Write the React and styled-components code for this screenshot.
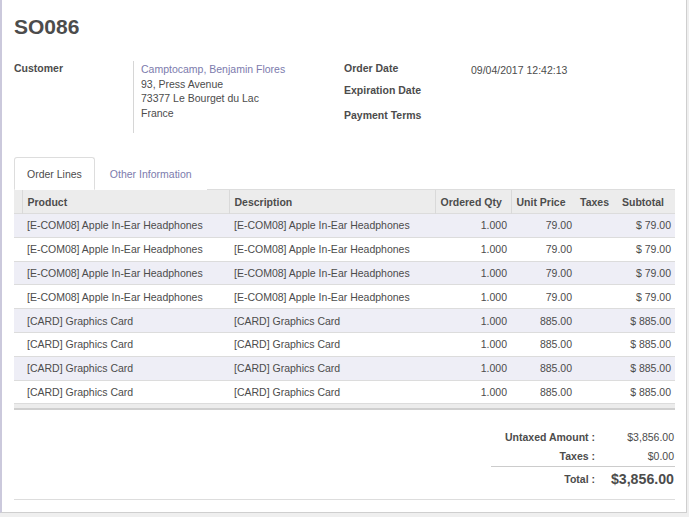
import React from "react";
import styled, { createGlobalStyle } from "styled-components";

const Global = createGlobalStyle`
  html, body { margin: 0; padding: 0; background: #efefef; }
  body { font-family: "Liberation Sans", Arial, sans-serif; font-size: 10.5px; color: #4c4c4c; }
`;

const Page = styled.div`
  width: 689px;
  height: 517px;
  overflow: hidden;
  background: #efefef;
`;

const Sheet = styled.div`
  box-sizing: border-box;
  width: 687px;
  height: 513px;
  background: #fff;
  border-left: 2px solid #cbc9dc;
  border-right: 1px solid #cfcfcf;
  border-bottom: 1px solid #cfcfcf;
  padding: 15px 11px 0 12px;
  display: flex;
  flex-direction: column;
`;

const Title = styled.h1`
  margin: 0;
  font-size: 21px;
  line-height: 24px;
  font-weight: bold;
  color: #4c4c4c;
`;

const Header = styled.div`
  display: grid;
  grid-template-columns: 330px 1fr;
  margin-top: 22px;
  height: 96px;
`;

const Group = styled.div`
  display: grid;
  grid-template-columns: ${(p) => p.$label}px 1fr;
  align-content: start;
`;

const Label = styled.div`
  font-weight: bold;
  line-height: 14px;
  height: 14px;
  margin-top: ${(p) => p.$mt || 0}px;
`;

const Value = styled.div`
  line-height: 14px;
  height: 14px;
  margin-top: ${(p) => (p.$mt || 0) + 2}px;
`;

const Address = styled.div`
  border-left: 1px solid #d6d6d6;
  padding: 0 0 0 7px;
  line-height: 14.5px;
  height: 72px;
`;

const Link = styled.div`
  color: #7c7bad;
  margin-top: 1px;
`;

const Tabs = styled.div`
  display: flex;
  border-bottom: 1px solid #ddd;
  height: 32px;
`;

const Tab = styled.div`
  box-sizing: border-box;
  height: 33px;
  padding: 0 ${(p) => (p.$active ? 12 : 14)}px;
  line-height: 32px;
  white-space: nowrap;
  color: ${(p) => (p.$active ? "#4c4c4c" : "#7c7bad")};
  background: #fff;
  border: 1px solid ${(p) => (p.$active ? "#ddd" : "transparent")};
  border-bottom-color: ${(p) => (p.$active ? "#fff" : "transparent")};
  border-radius: 3px 3px 0 0;
`;

const Table = styled.table`
  width: 661px;
  border-collapse: collapse;
  table-layout: fixed;
`;

const Th = styled.th`
  background: #ececec;
  height: 23px;
  padding: 0 5px 0 ${(p) => p.$pl ?? 5}px;
  text-align: left;
  font-weight: bold;
  border-left: ${(p) => (p.$sep ? "1px solid #d9d9d9" : "none")};
  white-space: nowrap;
  overflow: hidden;
`;

const HandleTh = styled.th`
  background: #ececec;
  padding: 0;
`;

const Tr = styled.tr`
  background: ${(p) => (p.$odd ? "#eeeef6" : "#fff")};
  border-top: 1px solid #dcdcdc;
`;

const Td = styled.td`
  height: 22.8px;
  padding: 0 ${(p) => (p.$right ? 4 : 5)}px 0 5px;
  text-align: ${(p) => (p.$right ? "right" : "left")};
  white-space: nowrap;
  overflow: hidden;
`;

const HandleCell = styled.td`
  padding: 0;
`;

const FootRow = styled.tr`
  background: #ececec;
  border-top: 1px solid #dcdcdc;
  border-bottom: 2px solid #cfcfcf;
`;

const FootCell = styled.td`
  height: 4px;
  padding: 0;
`;

const Totals = styled.div`
  align-self: flex-end;
  width: 184px;
  margin-top: 18px;
  display: grid;
  grid-template-columns: 1fr 80px;
`;

const TLabel = styled.div`
  text-align: right;
  font-weight: bold;
  line-height: 19px;
  ${(p) => p.$total && "border-top: 1px solid #ccc; padding-top: 3px; line-height: 18px;"}
`;

const TValue = styled.div`
  text-align: right;
  line-height: 19px;
  padding-right: 1px;
  ${(p) =>
    p.$total &&
    "border-top: 1px solid #ccc; padding-top: 3px; line-height: 18px; font-size: 14.2px; font-weight: bold;"}
`;

const BottomLine = styled.div`
  border-bottom: 1px solid #ddd;
  margin-top: 11px;
`;

const rows = [
  ...Array(4).fill({ p: "[E-COM08] Apple In-Ear Headphones", u: "79.00", s: "$ 79.00" }),
  ...Array(4).fill({ p: "[CARD] Graphics Card", u: "885.00", s: "$ 885.00" }),
];

export default function App() {
  return (
    <Page>
      <Global />
      <Sheet>
        <Title>SO086</Title>
        <Header>
          <Group $label={119}>
            <Label>Customer</Label>
            <Address>
              <Link>Camptocamp, Benjamin Flores</Link>
              <div>93, Press Avenue</div>
              <div>73377 Le Bourget du Lac</div>
              <div>France</div>
            </Address>
          </Group>
          <Group $label={127}>
            <Label>Order Date</Label>
            <Value>09/04/2017 12:42:13</Value>
            <Label $mt={6}>Expiration Date</Label>
            <Value $mt={6}></Value>
            <Label $mt={9}>Payment Terms</Label>
            <Value $mt={9}></Value>
          </Group>
        </Header>
        <Tabs>
          <Tab $active>Order Lines</Tab>
          <Tab>Other Information</Tab>
        </Tabs>
        <Table>
          <colgroup>
            <col style={{ width: 8 }} />
            <col style={{ width: 207 }} />
            <col style={{ width: 206 }} />
            <col style={{ width: 76 }} />
            <col style={{ width: 65 }} />
            <col style={{ width: 38 }} />
            <col style={{ width: 61 }} />
          </colgroup>
          <thead>
            <tr>
              <HandleTh />
              <Th $sep>Product</Th>
              <Th $sep>Description</Th>
              <Th $sep>Ordered Qty</Th>
              <Th $sep>Unit Price</Th>
              <Th $pl={4}>Taxes</Th>
              <Th $pl={8}>Subtotal</Th>
            </tr>
          </thead>
          <tbody>
            {rows.map((r, i) => (
              <Tr key={i} $odd={i % 2 === 0}>
                <HandleCell />
                <Td>{r.p}</Td>
                <Td>{r.p}</Td>
                <Td $right>1.000</Td>
                <Td $right>{r.u}</Td>
                <Td />
                <Td $right>{r.s}</Td>
              </Tr>
            ))}
            <FootRow>
              <FootCell colSpan={7} />
            </FootRow>
          </tbody>
        </Table>
        <Totals>
          <TLabel>Untaxed Amount :</TLabel>
          <TValue>$3,856.00</TValue>
          <TLabel>Taxes :</TLabel>
          <TValue>$0.00</TValue>
          <TLabel $total>Total :</TLabel>
          <TValue $total>$3,856.00</TValue>
        </Totals>
        <BottomLine />
      </Sheet>
    </Page>
  );
}
